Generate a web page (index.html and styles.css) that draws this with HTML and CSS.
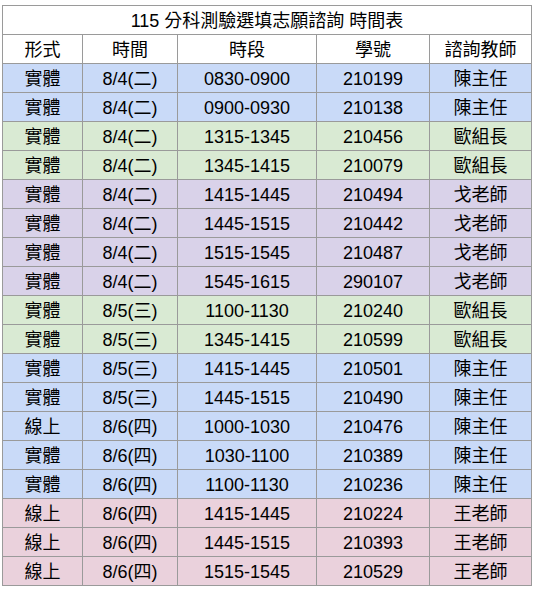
FILE: index.html
```html
<!DOCTYPE html>
<html lang="zh-Hant">
<head>
<meta charset="utf-8">
<title>115 分科測驗選填志願諮詢 時間表</title>
<link rel="stylesheet" href="styles.css">
</head>
<body>
<table class="schedule">
  <colgroup>
    <col class="c1"><col class="c2"><col class="c3"><col class="c4"><col class="c5">
  </colgroup>
  <thead>
    <tr><th colspan="5" class="title">115 分科測驗選填志願諮詢 時間表</th></tr>
    <tr class="head"><th>形式</th><th>時間</th><th>時段</th><th>學號</th><th>諮詢教師</th></tr>
  </thead>
  <tbody>
    <tr class="blue"><td>實體</td><td>8/4(二)</td><td>0830-0900</td><td>210199</td><td>陳主任</td></tr>
    <tr class="blue"><td>實體</td><td>8/4(二)</td><td>0900-0930</td><td>210138</td><td>陳主任</td></tr>
    <tr class="green"><td>實體</td><td>8/4(二)</td><td>1315-1345</td><td>210456</td><td>歐組長</td></tr>
    <tr class="green"><td>實體</td><td>8/4(二)</td><td>1345-1415</td><td>210079</td><td>歐組長</td></tr>
    <tr class="purple"><td>實體</td><td>8/4(二)</td><td>1415-1445</td><td>210494</td><td>戈老師</td></tr>
    <tr class="purple"><td>實體</td><td>8/4(二)</td><td>1445-1515</td><td>210442</td><td>戈老師</td></tr>
    <tr class="purple"><td>實體</td><td>8/4(二)</td><td>1515-1545</td><td>210487</td><td>戈老師</td></tr>
    <tr class="purple"><td>實體</td><td>8/4(二)</td><td>1545-1615</td><td>290107</td><td>戈老師</td></tr>
    <tr class="green"><td>實體</td><td>8/5(三)</td><td>1100-1130</td><td>210240</td><td>歐組長</td></tr>
    <tr class="green"><td>實體</td><td>8/5(三)</td><td>1345-1415</td><td>210599</td><td>歐組長</td></tr>
    <tr class="blue"><td>實體</td><td>8/5(三)</td><td>1415-1445</td><td>210501</td><td>陳主任</td></tr>
    <tr class="blue"><td>實體</td><td>8/5(三)</td><td>1445-1515</td><td>210490</td><td>陳主任</td></tr>
    <tr class="blue"><td>線上</td><td>8/6(四)</td><td>1000-1030</td><td>210476</td><td>陳主任</td></tr>
    <tr class="blue"><td>實體</td><td>8/6(四)</td><td>1030-1100</td><td>210389</td><td>陳主任</td></tr>
    <tr class="blue"><td>實體</td><td>8/6(四)</td><td>1100-1130</td><td>210236</td><td>陳主任</td></tr>
    <tr class="pink"><td>線上</td><td>8/6(四)</td><td>1415-1445</td><td>210224</td><td>王老師</td></tr>
    <tr class="pink"><td>線上</td><td>8/6(四)</td><td>1445-1515</td><td>210393</td><td>王老師</td></tr>
    <tr class="pink"><td>線上</td><td>8/6(四)</td><td>1515-1545</td><td>210529</td><td>王老師</td></tr>
  </tbody>
</table>
</body>
</html>
```
FILE: styles.css
```css
html, body {
  margin: 0;
  padding: 0;
  background: #ffffff;
}

body {
  padding: 5px 0 0 2px;
  font-family: "Liberation Sans", Arial, "Noto Sans CJK TC", sans-serif;
  font-size: 18px;
  color: #000000;
}

.schedule {
  border-collapse: collapse;
  table-layout: fixed;
  width: 529px;
}

.c1 { width: 80px; }
.c2 { width: 95px; }
.c3 { width: 139px; }
.c4 { width: 113px; }
.c5 { width: 102px; }

.schedule th,
.schedule td {
  border: 1px solid #9a9a9a;
  height: 27px;
  padding: 1px 0 0 0;
  text-align: center;
  vertical-align: middle;
  font-weight: normal;
  line-height: 20px;
  white-space: nowrap;
}

.schedule .title {
  background: #ffffff;
}

.blue td { background: #c9daf8; }
.green td { background: #d9ead3; }
.purple td { background: #d9d2e9; }
.pink td { background: #ead1dc; }
```
